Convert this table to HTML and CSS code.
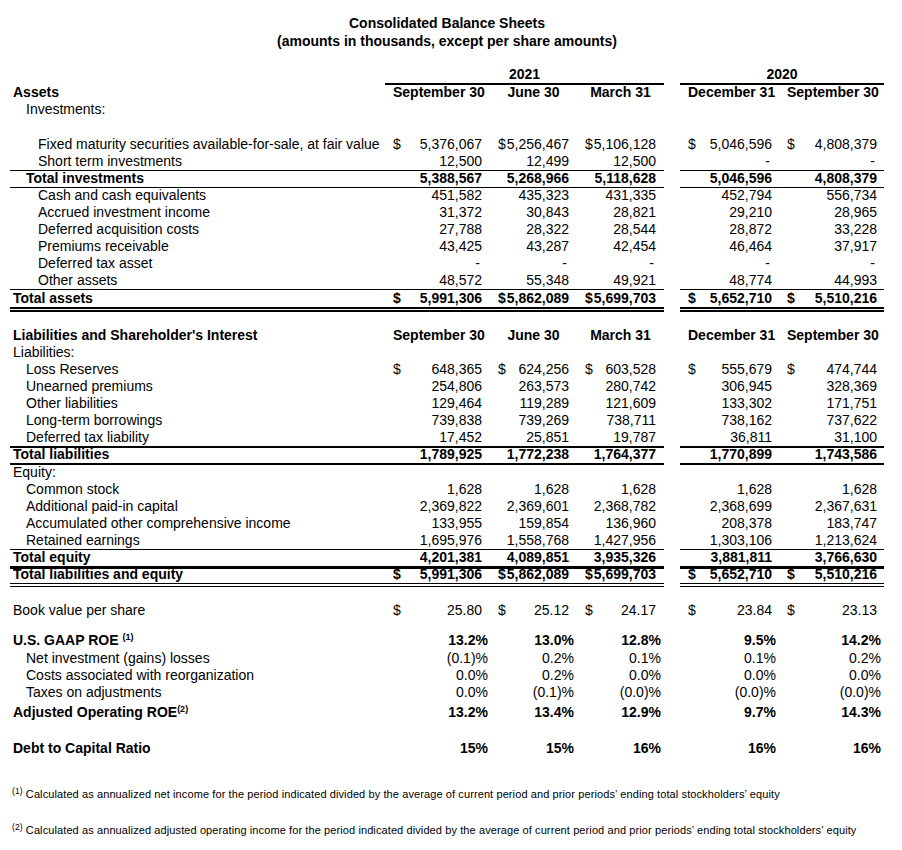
FILE: index.html
```html
<!DOCTYPE html>
<html lang="en">
<head>
  <meta charset="UTF-8">
  <title>Consolidated Balance Sheets</title>
  <link rel="stylesheet" href="styles.css">
</head>
<body>
  <div class="sheet">
    <div class="head">
      <div>Consolidated Balance Sheets</div>
      <div>(amounts in thousands, except per share amounts)</div>
    </div>

    <div class="row yr">
      <div></div>
      <div class="y21">2021</div>
      <div class="y20">2020</div>
    </div>

    <!-- Assets -->
    <div class="row hd">
      <div class="l b">Assets</div>
      <div class="h">September 30</div><div class="h">June 30</div><div class="h">March 31</div>
      <div class="h">December 31</div><div class="h">September 30</div>
    </div>
    <div class="row"><div class="l i1">Investments:</div></div>
    <div class="row"><div class="l"></div></div>
    <div class="row">
      <div class="l i2">Fixed maturity securities available-for-sale, at fair value</div>
      <div class="n"><i>$</i>5,376,067</div><div class="n"><i>$</i>5,256,467</div><div class="n"><i>$</i>5,106,128</div>
      <div class="n"><i>$</i>5,046,596</div><div class="n"><i>$</i>4,808,379</div>
    </div>
    <div class="row u1">
      <div class="l i2">Short term investments</div>
      <div class="n">12,500</div><div class="n">12,499</div><div class="n">12,500</div>
      <div class="n"><span class="d">-</span></div><div class="n"><span class="d">-</span></div>
    </div>
    <div class="row u1 b">
      <div class="l i1">Total investments</div>
      <div class="n">5,388,567</div><div class="n">5,268,966</div><div class="n">5,118,628</div>
      <div class="n">5,046,596</div><div class="n">4,808,379</div>
    </div>
    <div class="row">
      <div class="l i2">Cash and cash equivalents</div>
      <div class="n">451,582</div><div class="n">435,323</div><div class="n">431,335</div>
      <div class="n">452,794</div><div class="n">556,734</div>
    </div>
    <div class="row">
      <div class="l i2">Accrued investment income</div>
      <div class="n">31,372</div><div class="n">30,843</div><div class="n">28,821</div>
      <div class="n">29,210</div><div class="n">28,965</div>
    </div>
    <div class="row">
      <div class="l i2">Deferred acquisition costs</div>
      <div class="n">27,788</div><div class="n">28,322</div><div class="n">28,544</div>
      <div class="n">28,872</div><div class="n">33,228</div>
    </div>
    <div class="row">
      <div class="l i2">Premiums receivable</div>
      <div class="n">43,425</div><div class="n">43,287</div><div class="n">42,454</div>
      <div class="n">46,464</div><div class="n">37,917</div>
    </div>
    <div class="row">
      <div class="l i2">Deferred tax asset</div>
      <div class="n"><span class="d">-</span></div><div class="n"><span class="d">-</span></div><div class="n"><span class="d">-</span></div>
      <div class="n"><span class="d">-</span></div><div class="n"><span class="d">-</span></div>
    </div>
    <div class="row u1">
      <div class="l i2">Other assets</div>
      <div class="n">48,572</div><div class="n">55,348</div><div class="n">49,921</div>
      <div class="n">48,774</div><div class="n">44,993</div>
    </div>
    <div class="row b ta">
      <div class="l">Total assets</div>
      <div class="n"><i>$</i>5,991,306</div><div class="n"><i>$</i>5,862,089</div><div class="n"><i>$</i>5,699,703</div>
      <div class="n"><i>$</i>5,652,710</div><div class="n"><i>$</i>5,510,216</div>
    </div>

    <!-- Liabilities -->
    <div class="row hd lh">
      <div class="l b">Liabilities and Shareholder's Interest</div>
      <div class="h">September 30</div><div class="h">June 30</div><div class="h">March 31</div>
      <div class="h">December 31</div><div class="h">September 30</div>
    </div>
    <div class="row"><div class="l">Liabilities:</div></div>
    <div class="row">
      <div class="l i1">Loss Reserves</div>
      <div class="n"><i>$</i>648,365</div><div class="n"><i>$</i>624,256</div><div class="n"><i>$</i>603,528</div>
      <div class="n"><i>$</i>555,679</div><div class="n"><i>$</i>474,744</div>
    </div>
    <div class="row">
      <div class="l i1">Unearned premiums</div>
      <div class="n">254,806</div><div class="n">263,573</div><div class="n">280,742</div>
      <div class="n">306,945</div><div class="n">328,369</div>
    </div>
    <div class="row">
      <div class="l i1">Other liabilities</div>
      <div class="n">129,464</div><div class="n">119,289</div><div class="n">121,609</div>
      <div class="n">133,302</div><div class="n">171,751</div>
    </div>
    <div class="row">
      <div class="l i1">Long-term borrowings</div>
      <div class="n">739,838</div><div class="n">739,269</div><div class="n">738,711</div>
      <div class="n">738,162</div><div class="n">737,622</div>
    </div>
    <div class="row u2">
      <div class="l i1">Deferred tax liability</div>
      <div class="n">17,452</div><div class="n">25,851</div><div class="n">19,787</div>
      <div class="n">36,811</div><div class="n">31,100</div>
    </div>
    <div class="row u2 b">
      <div class="l">Total liabilities</div>
      <div class="n">1,789,925</div><div class="n">1,772,238</div><div class="n">1,764,377</div>
      <div class="n">1,770,899</div><div class="n">1,743,586</div>
    </div>
    <div class="row"><div class="l">Equity:</div></div>
    <div class="row">
      <div class="l i1">Common stock</div>
      <div class="n">1,628</div><div class="n">1,628</div><div class="n">1,628</div>
      <div class="n">1,628</div><div class="n">1,628</div>
    </div>
    <div class="row">
      <div class="l i1">Additional paid-in capital</div>
      <div class="n">2,369,822</div><div class="n">2,369,601</div><div class="n">2,368,782</div>
      <div class="n">2,368,699</div><div class="n">2,367,631</div>
    </div>
    <div class="row">
      <div class="l i1">Accumulated other comprehensive income</div>
      <div class="n">133,955</div><div class="n">159,854</div><div class="n">136,960</div>
      <div class="n">208,378</div><div class="n">183,747</div>
    </div>
    <div class="row u1">
      <div class="l i1">Retained earnings</div>
      <div class="n">1,695,976</div><div class="n">1,558,768</div><div class="n">1,427,956</div>
      <div class="n">1,303,106</div><div class="n">1,213,624</div>
    </div>
    <div class="row u3 b">
      <div class="l">Total equity</div>
      <div class="n">4,201,381</div><div class="n">4,089,851</div><div class="n">3,935,326</div>
      <div class="n">3,881,811</div><div class="n">3,766,630</div>
    </div>
    <div class="row b tle">
      <div class="l">Total liabilities and equity</div>
      <div class="n"><i>$</i>5,991,306</div><div class="n"><i>$</i>5,862,089</div><div class="n"><i>$</i>5,699,703</div>
      <div class="n"><i>$</i>5,652,710</div><div class="n"><i>$</i>5,510,216</div>
    </div>

    <!-- Ratios -->
    <div class="row bv">
      <div class="l">Book value per share</div>
      <div class="n"><i>$</i>25.80</div><div class="n"><i>$</i>25.12</div><div class="n"><i>$</i>24.17</div>
      <div class="n"><i>$</i>23.84</div><div class="n"><i>$</i>23.13</div>
    </div>
    <div class="row pct b roe">
      <div class="l">U.S. GAAP ROE <sup>(1)</sup></div>
      <div class="n">13.2%</div><div class="n">13.0%</div><div class="n">12.8%</div>
      <div class="n">9.5%</div><div class="n">14.2%</div>
    </div>
    <div class="row pct net">
      <div class="l i1">Net investment (gains) losses</div>
      <div class="n">(0.1)%</div><div class="n">0.2%</div><div class="n">0.1%</div>
      <div class="n">0.1%</div><div class="n">0.2%</div>
    </div>
    <div class="row pct">
      <div class="l i1">Costs associated with reorganization</div>
      <div class="n">0.0%</div><div class="n">0.2%</div><div class="n">0.0%</div>
      <div class="n">0.0%</div><div class="n">0.0%</div>
    </div>
    <div class="row pct">
      <div class="l i1">Taxes on adjustments</div>
      <div class="n">0.0%</div><div class="n">(0.1)%</div><div class="n">(0.0)%</div>
      <div class="n">(0.0)%</div><div class="n">(0.0)%</div>
    </div>
    <div class="row pct b adj">
      <div class="l">Adjusted Operating ROE<sup>(2)</sup></div>
      <div class="n">13.2%</div><div class="n">13.4%</div><div class="n">12.9%</div>
      <div class="n">9.7%</div><div class="n">14.3%</div>
    </div>
    <div class="row pct b debt">
      <div class="l">Debt to Capital Ratio</div>
      <div class="n">15%</div><div class="n">15%</div><div class="n">16%</div>
      <div class="n">16%</div><div class="n">16%</div>
    </div>

    <div class="notes">
      <p><sup>(1)</sup> Calculated as annualized net income for the period indicated divided by the average of current period and prior periods’ ending total stockholders’ equity</p>
      <p><sup>(2)</sup> Calculated as annualized adjusted operating income for the period indicated divided by the average of current period and prior periods’ ending total stockholders’ equity</p>
    </div>
  </div>
</body>
</html>
```

FILE: styles.css
```css
body {
  margin: 0;
  background: #fff;
  color: #000;
  font-family: "Liberation Sans", Arial, sans-serif;
  font-size: 14px;
}

.sheet {
  width: 874px;
  padding-left: 10px;
}

.head {
  padding-top: 14px;
  text-align: center;
  font-weight: bold;
  line-height: 18px;
}

/* table rows: label + 5 value columns, gap before 2020 via margin */
.row {
  display: grid;
  grid-template-columns: 375px 103px 87px 89px 114px 106px;
  height: 17.1px;
  line-height: 17px;
}

.row > * {
  box-sizing: border-box;
  white-space: nowrap;
}

.row > :nth-child(5) {
  margin-left: 16px;
}

.b {
  font-weight: bold;
}

.l {
  padding-left: 3px;
}

.l.i1 {
  padding-left: 16px;
}

.l.i2 {
  padding-left: 28px;
}

.n {
  display: flex;
  justify-content: flex-end;
}

.n i {
  font-style: normal;
  margin-right: auto;
}

.n .d {
  margin-right: 2px;
}

.row > :nth-child(2) { padding: 0 6px 0 8px; }
.row > :nth-child(3) { padding: 0 6px 0 10px; }
.row > :nth-child(4) { padding: 0 8px 0 10px; }
.row > :nth-child(5) { padding: 0 6px 0 8px; }
.row > :nth-child(6) { padding: 0 7px 0 9px; }

.pct > :nth-child(2) { padding-right: 0; }
.pct > :nth-child(3) { padding-right: 1px; }
.pct > :nth-child(4) { padding-right: 3px; }
.pct > :nth-child(5) { padding-right: 2px; }
.pct > :nth-child(6) { padding-right: 3px; }

.h {
  text-align: center;
  font-weight: bold;
}

/* year header */
.yr {
  margin-top: 16px;
  height: 18.4px;
  font-weight: bold;
}

.yr .y21,
.yr .y20 {
  text-align: center;
  border-bottom: 2px solid #000;
  padding: 0;
}

.yr .y21 {
  grid-column: 2 / 5;
}

.yr .y20 {
  grid-column: 5 / 7;
  margin-left: 16px;
}

/* rules */
.u1 > * {
  border-bottom: 1px solid #000;
}

.u2 > * {
  border-bottom: 2px solid #000;
}

.u3 > * {
  border-bottom: 3px solid #000;
}

.ta {
  height: 21px;
}

.ta > * {
  border-bottom: 5px double #000;
}

.lh {
  margin-top: 16.3px;
}

.tle {
  height: 19px;
}

.tle > * {
  border-bottom: 4px double #000;
}

.bv {
  margin-top: 16.6px;
}

.roe {
  margin-top: 12.9px;
}

.net {
  margin-top: 1.2px;
}

.adj {
  margin-top: 2.3px;
}

.debt {
  margin-top: 18.9px;
}

sup {
  font-size: 9px;
  line-height: 0;
  vertical-align: 5px;
}

/* footnotes */
.notes {
  margin-top: 31.6px;
  padding-left: 2px;
  font-size: 11px;
  letter-spacing: 0.1px;
}

.notes p {
  margin: 0 0 24px;
  line-height: 12px;
  white-space: nowrap;
}

.notes sup {
  font-size: 8.5px;
  vertical-align: 4px;
}
```
